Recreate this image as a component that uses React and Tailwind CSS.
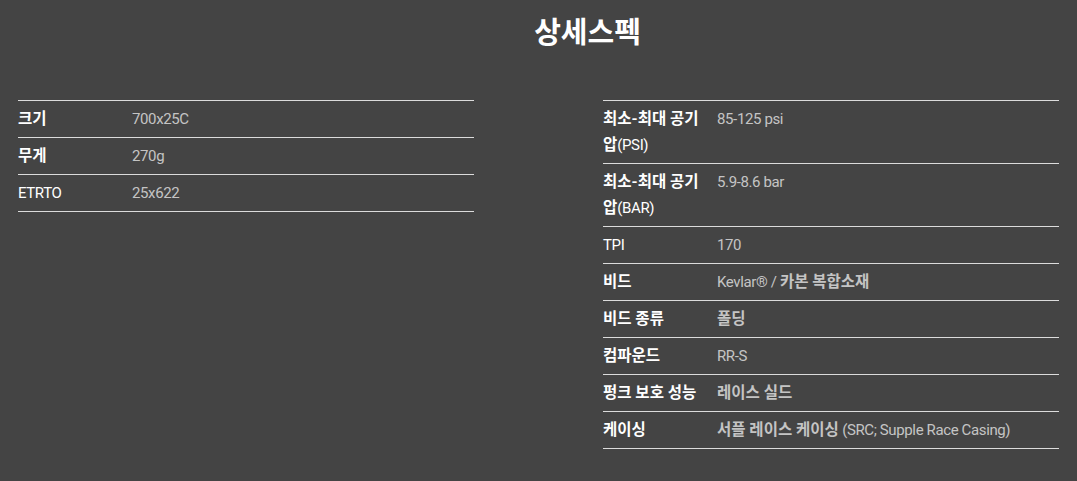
const FONT = { fontFamily: 'Roboto, "Noto Sans CJK KR", sans-serif' }

// 한글 구간만 굵게 (조금 더 크게)
function K({ children }) {
  return <span className="text-[15.5px] font-bold tracking-normal">{children}</span>
}

const left = [
  [<K>크기</K>, '700x25C'],
  [<K>무게</K>, '270g'],
  ['ETRTO', '25x622'],
]

const right = [
  [<><K>최소-최대 공기 압</K>(PSI)</>, '85-125 psi'],
  [<><K>최소-최대 공기 압</K>(BAR)</>, '5.9-8.6 bar'],
  ['TPI', '170'],
  [<K>비드</K>, <>Kevlar® / <K>카본 복합소재</K></>],
  [<K>비드 종류</K>, <K>폴딩</K>],
  [<K>컴파운드</K>, 'RR-S'],
  [<K>펑크 보호 성능</K>, <K>레이스 실드</K>],
  [<K>케이싱</K>, <><K>서플 레이스 케이싱</K> (SRC; Supple Race Casing)</>],
]

function SpecTable({ rows }) {
  return (
    <div className="border-t border-[#dcdcdc]">
      {rows.map((r, i) => (
        <div key={i} className="flex border-b border-[#dcdcdc] py-[5px] text-[15px] leading-[26px] tracking-[-0.025em]">
          <div className="w-[114px] shrink-0 pr-3 text-white">{r[0]}</div>
          <div className="text-[#c4c4c4]">{r[1]}</div>
        </div>
      ))}
    </div>
  )
}

export default function App() {
  return (
    <div className="min-h-[481px] w-[1077px] bg-[#444444] px-[18px]" style={FONT}>
      <h1 className="pl-[98px] pt-[14px] text-center text-[29px] font-bold leading-[38px] text-white">상세스펙</h1>
      <div className="mt-[48px] grid grid-cols-[456px_456px] gap-x-[129px]">
        <SpecTable rows={left} />
        <SpecTable rows={right} />
      </div>
    </div>
  )
}
